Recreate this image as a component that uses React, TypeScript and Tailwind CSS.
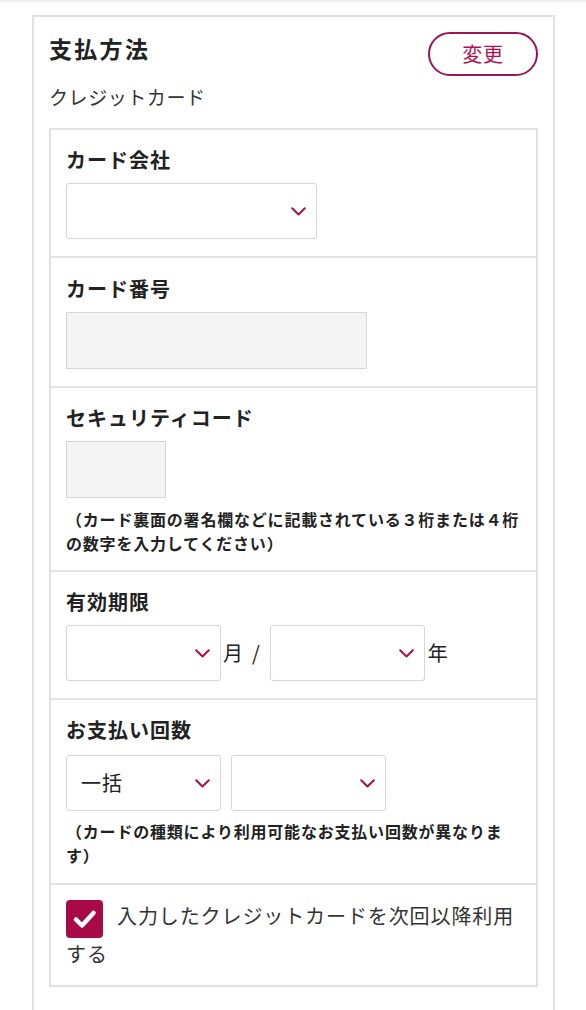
import React from "react";

const FONT = { fontFamily: '"Noto Sans CJK JP", "Noto Sans", sans-serif' };

function Chevron() {
  return (
    <svg width="15" height="9" viewBox="0 0 15 9" fill="none" className="shrink-0">
      <path d="M1.2 1.2 L7.5 7.5 L13.8 1.2" stroke="#a8124c" strokeWidth="2" strokeLinecap="round" strokeLinejoin="round" />
    </svg>
  );
}

function Select({ w, value }: { w: string; value?: string }) {
  return (
    <div className={`${w} h-[56px] shrink-0 bg-white border border-[#d6d6d6] rounded-[3px] flex items-center justify-between pl-[14px] pr-[10px]`}>
      <span className="text-[20px] tracking-[1px] text-[#222]">{value ?? ""}</span>
      <Chevron />
    </div>
  );
}

function Label({ children }: { children: React.ReactNode }) {
  return <div className="text-[20px] leading-[28px] font-bold tracking-[0.05em] text-[#222]">{children}</div>;
}

export default function App() {
  return (
    <div style={FONT} className="w-[586px] min-h-[1010px] bg-white text-[#333]">
      <div className="h-[2px] bg-[#f0f0f0]" />
      <div className="mt-[13px] ml-[32px] w-[523px] border-2 border-b-0 border-[#e2e2e2] px-[15px] pb-[40px]">
        <div className="pt-[15px] flex justify-between items-start">
          <h2 className="text-[23px] leading-[33px] font-bold tracking-[0.1em] text-[#222]">支払方法</h2>
          <button className="w-[110px] h-[44px] rounded-full border-2 border-[#9c1456] text-[#b0124f] text-[20px] tracking-[0.04em] flex items-center justify-center">
            変更
          </button>
        </div>
        <p className="mt-[7px] text-[19px] leading-[27px] tracking-[0.03em] text-[#333]">クレジットカード</p>

        <div className="mt-[18px] border-2 border-[#e2e2e2]">
          <section className="pl-[15px] pr-[12px] pt-[16px] pb-[17px]">
            <Label>カード会社</Label>
            <div className="mt-[9px]">
              <Select w="w-[251px]" />
            </div>
          </section>

          <section className="border-t-2 border-[#e2e2e2] pl-[15px] pr-[12px] pt-[17px] pb-[17px]">
            <Label>カード番号</Label>
            <div className="mt-[9px] w-[301px] h-[57px] bg-[#f4f4f4] border border-[#d6d6d6]" />
          </section>

          <section className="border-t-2 border-[#e2e2e2] pl-[15px] pr-[12px] pt-[16px] pb-[15px]">
            <Label>セキュリティコード</Label>
            <div className="mt-[9px] w-[100px] h-[57px] bg-[#f4f4f4] border border-[#d6d6d6]" />
            <p className="mt-[9px] text-[16px] leading-[24px] font-bold tracking-[0.05em] text-[#222]">
              （カード裏面の署名欄などに記載されている３桁または４桁の数字を入力してください）
            </p>
          </section>

          <section className="border-t-2 border-[#e2e2e2] pl-[15px] pr-[12px] pt-[16px] pb-[17px]">
            <Label>有効期限</Label>
            <div className="mt-[9px] flex items-center text-[20px] text-[#222]">
              <Select w="w-[155px]" />
              <span className="ml-[2px]">月</span>
              <span className="ml-[9px] mr-[10px]">/</span>
              <Select w="w-[155px]" />
              <span className="ml-[3px]">年</span>
            </div>
          </section>

          <section className="border-t-2 border-[#e2e2e2] pl-[15px] pr-[12px] pt-[16px] pb-[16px]">
            <Label>お支払い回数</Label>
            <div className="mt-[11px] flex items-center gap-[10px]">
              <Select w="w-[155px]" value="一括" />
              <Select w="w-[155px]" />
            </div>
            <p className="mt-[8px] text-[16px] leading-[24px] font-bold tracking-[0.05em] text-[#222]">
              （カードの種類により利用可能なお支払い回数が異なります）
            </p>
          </section>

          <section className="border-t-2 border-[#e2e2e2] pl-[15px] pr-[12px] pt-[15px] pb-[16px]">
            <p className="text-[20px] leading-[31px] tracking-[0.9px] text-[#333]">
              <span className="inline-block align-middle w-[37px] h-[38px] rounded-[4px] bg-[#a80a48] mr-[14px]">
                <svg width="37" height="38" viewBox="0 0 37 38" fill="none">
                  <path d="M10 19.5 L16 25.5 L27.5 13" stroke="#ffffff" strokeWidth="4.5" strokeLinecap="round" strokeLinejoin="round" />
                </svg>
              </span>
              入力したクレジットカードを次回以降利用する
            </p>
          </section>
        </div>
      </div>
    </div>
  );
}
